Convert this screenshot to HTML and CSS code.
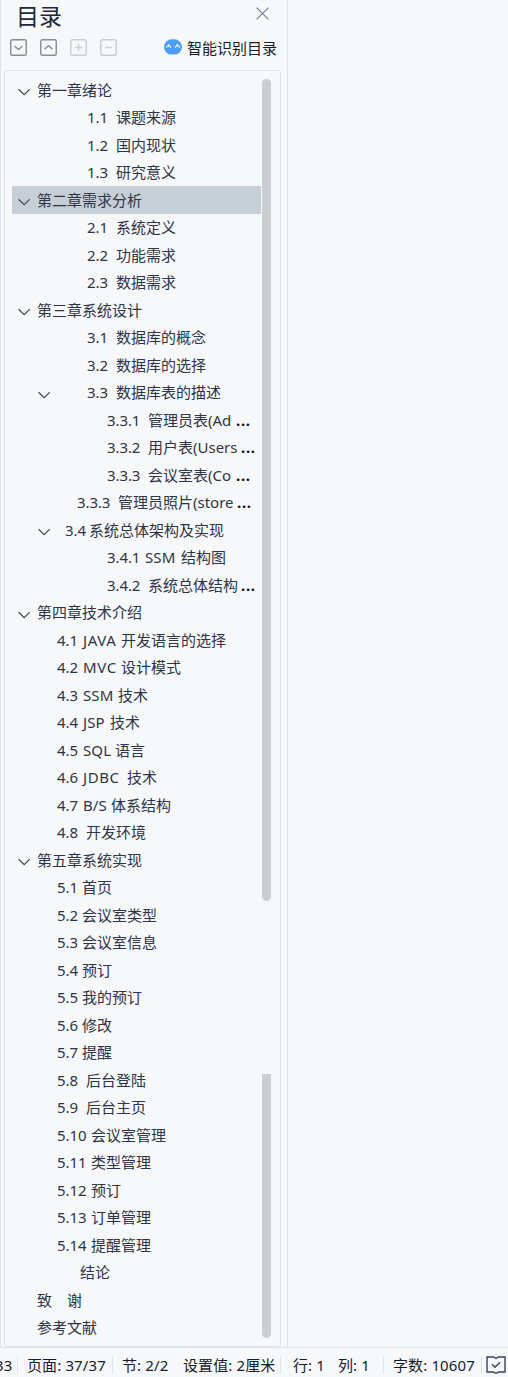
FILE: index.html
```html
<!DOCTYPE html>
<html lang="zh-CN">
<head>
<meta charset="utf-8">
<title>目录</title>
<link rel="stylesheet" href="styles.css">
</head>
<body>
<svg width="0" height="0" class="defs"><defs><symbol id="chev" viewBox="0 0 12 8"><path d="M.6 1.200 6.200 6.700 11.800 1.200" fill="none" stroke="currentColor" stroke-width="1.200"/></symbol></defs></svg>
<main class="workspace">
<aside class="panel">
<header class="head"><h1>目录</h1>
<svg class="close" viewBox="0 0 12 12"><path d="M.5.5l11 11M11.5.5l-11 11" fill="none" stroke="#74798c" stroke-width="1"/></svg></header>
<div class="tools">
<svg class="tool" viewBox="0 0 17 17"><rect x=".75" y=".75" width="15.5" height="15.5" rx="1.5"/><path d="M4.5 7l4 3.6 4-3.6"/></svg>
<svg class="tool" viewBox="0 0 17 17"><rect x=".75" y=".75" width="15.5" height="15.5" rx="1.5"/><path d="M4.5 10.3l4-3.6 4 3.6"/></svg>
<svg class="tool off" viewBox="0 0 17 17"><rect x=".75" y=".75" width="15.5" height="15.5" rx="1.5"/><path d="M5 8.5h7M8.5 5v7"/></svg>
<svg class="tool off" viewBox="0 0 17 17"><rect x=".75" y=".75" width="15.5" height="15.5" rx="1.5"/><path d="M5 8.5h7"/></svg>
<div class="smart"><svg class="bot" viewBox="0 0 18 16"><rect x="0" y=".2" width="18" height="15.400" rx="8" ry="7.500" fill="#4c9df5"/><g fill="#fff"><circle cx="4.600" cy="6.500" r="1.200"/><circle cx="13.400" cy="6.500" r="1.200"/><circle cx="2.600" cy="7.900" r=".8"/><circle cx="6.400" cy="7.900" r=".8"/><circle cx="11.600" cy="7.900" r=".8"/><circle cx="15.400" cy="7.900" r=".8"/></g></svg><span>智能识别目录</span></div>
</div>
<div class="box">
<div class="tree">
<div class="row chapter"><svg class="chev"><use href="#chev"/></svg>第一章绪论</div>
<div class="row deep"><b class="wide">1.1</b>课题来源</div>
<div class="row deep"><b class="wide">1.2</b>国内现状</div>
<div class="row deep"><b class="wide">1.3</b>研究意义</div>
<div class="row chapter selected"><svg class="chev"><use href="#chev"/></svg>第二章需求分析</div>
<div class="row deep"><b class="wide">2.1</b>系统定义</div>
<div class="row deep"><b class="wide">2.2</b>功能需求</div>
<div class="row deep"><b class="wide">2.3</b>数据需求</div>
<div class="row chapter"><svg class="chev"><use href="#chev"/></svg>第三章系统设计</div>
<div class="row deep"><b class="wide">3.1</b>数据库的概念</div>
<div class="row deep"><b class="wide">3.2</b>数据库的选择</div>
<div class="row nested"><svg class="chev"><use href="#chev"/></svg><b class="wide">3.3</b>数据库表的描述</div>
<div class="row sub"><b class="triple">3.3.1</b><span class="clip c1">管理员表(Ad</span><i>...</i></div>
<div class="row sub"><b class="triple">3.3.2</b><span class="clip c2">用户表(Users</span><i>...</i></div>
<div class="row sub"><b class="triple">3.3.3</b><span class="clip c1">会议室表(Co</span><i>...</i></div>
<div class="row photo"><b class="triple">3.3.3</b><span class="clip c3">管理员照片(store</span><i>...</i></div>
<div class="row nested arch"><svg class="chev"><use href="#chev"/></svg><b class="tight">3.4</b>系统总体架构及实现</div>
<div class="row sub"><b class="mid">3.4.1</b><em class="w36">SSM</em>结构图</div>
<div class="row sub"><b class="triple">3.4.2</b><span class="clip c2">系统总体结构</span><i>...</i></div>
<div class="row chapter"><svg class="chev"><use href="#chev"/></svg>第四章技术介绍</div>
<div class="row item"><b class="latin">4.1</b><em class="w38 loose">JAVA</em>开发语言的选择</div>
<div class="row item"><b class="latin">4.2</b><em class="w38 loose">MVC</em>设计模式</div>
<div class="row item"><b class="latin">4.3</b><em class="w35">SSM</em>技术</div>
<div class="row item"><b class="latin">4.4</b><em class="w27">JSP</em>技术</div>
<div class="row item"><b class="latin">4.5</b><em class="w32">SQL</em>语言</div>
<div class="row item"><b class="latin">4.6</b><em class="w44 loose">JDBC</em>技术</div>
<div class="row item"><b class="latin">4.7</b><em class="w28">B/S</em>体系结构</div>
<div class="row item"><b class="wide">4.8</b>开发环境</div>
<div class="row chapter"><svg class="chev"><use href="#chev"/></svg>第五章系统实现</div>
<div class="row item"><b>5.1</b>首页</div>
<div class="row item"><b>5.2</b>会议室类型</div>
<div class="row item"><b>5.3</b>会议室信息</div>
<div class="row item"><b>5.4</b>预订</div>
<div class="row item"><b>5.5</b>我的预订</div>
<div class="row item"><b>5.6</b>修改</div>
<div class="row item"><b>5.7</b>提醒</div>
<div class="row item"><b class="wide">5.8</b>后台登陆</div>
<div class="row item"><b class="wide">5.9</b>后台主页</div>
<div class="row item"><b class="ten">5.10</b>会议室管理</div>
<div class="row item"><b class="ten">5.11</b>类型管理</div>
<div class="row item"><b class="ten">5.12</b>预订</div>
<div class="row item"><b class="ten">5.13</b>订单管理</div>
<div class="row item"><b class="ten">5.14</b>提醒管理</div>
<div class="row ending">结论</div>
<div class="row plain">致　谢</div>
<div class="row plain">参考文献</div>
</div>
<div class="rail"><div class="thumb upper"></div><div class="thumb lower"></div></div>
</div>
</aside>
</main>
<footer class="status">
<span class="cut">33</span><span class="page">页面: 37/37</span><span class="section">节: 2/2</span><span class="setting">设置值: 2厘米</span><span class="line">行: 1</span><span class="col">列: 1</span><span class="count">字数: 10607</span>
<svg class="check" viewBox="0 0 20 18"><path d="M1 1h6.500l2.500 1.500L12.500 1H19v15h-6.500L10 17.300 7.500 16H1zM6 8.300l3 3 5-5" fill="none" stroke="#3b4055" stroke-width="1.400"/></svg>
</footer>
</body>
</html>
```
FILE: styles.css
```css
* { box-sizing: border-box; }
body {
  margin: 0;
  width: 508px;
  height: 1377px;
  overflow: hidden;
  display: flex;
  flex-direction: column;
  background: #f6f8fa;
  color: #2f3447;
  font: 15px/27px "Noto Sans", "Noto Sans CJK SC", sans-serif;
}
.defs { display: none; }
.workspace { height: 1347px; flex: none; }
.panel {
  width: 288px;
  height: 1347px;
  border-left: 1px solid #e1e3eb;
  border-right: 1px solid #e1e3eb;
}
.head { height: 34px; display: flex; padding: 0 18px 0 15px; justify-content: space-between; }
h1 { margin: 0; font: 400 23px/31px "Noto Sans CJK SC", sans-serif; color: #222839; }
.close { width: 13px; height: 13px; margin-top: 7px; }
.tools { height: 36px; display: flex; padding: 5px 0 0 9px; gap: 13px; }
.tool { width: 17px; height: 17px; fill: none; stroke: #8a8c91; stroke-width: 1.4; }
.tool.off { stroke: #cbcdd1; }
.smart { display: flex; margin-left: 34px; line-height: 18px; color: #171c2b; }
.smart span { white-space: nowrap; }
.bot { width: 18px; height: 16px; margin-right: 5px; }
.box {
  width: 277px;
  height: 1277px;
  margin-left: 3px;
  border: 1px solid #e1e3eb;
  border-radius: 3px;
  display: flex;
}
.tree { width: 249px; margin: 5.75px 0 0 7px; }
.row { height: 27.5px; line-height: 27.5px; display: flex; align-items: center; white-space: pre; }
.chapter { padding-left: 6px; }
.chapter .chev { margin-right: 7px; }
.selected { background: #c6ced6; box-shadow: 0 -1px #c6ced6; }
.chev { width: 12px; height: 8px; margin-top: 3px; flex: none; color: #41475a; }
.deep { padding-left: 75px; }
.nested { padding-left: 26px; }
.nested .chev { margin-right: 37px; }
.arch .chev { margin-right: 15px; }
.sub { padding-left: 95px; }
.photo { padding-left: 65px; }
.item { padding-left: 45px; }
.ending { padding-left: 68px; }
.plain { padding-left: 25px; }
b { width: 25px; font-weight: 400; flex: none; letter-spacing: -.1px; }
.wide { width: 29px; }
.triple { width: 41px; }
.mid { width: 38px; }
.tight { width: 24px; }
.latin { width: 26px; }
.ten { width: 34px; }
em { font-style: normal; flex: none; letter-spacing: .1px; }
.loose { letter-spacing: .6px; }
.w27 { width: 27px; }
.w28 { width: 28px; }
.w32 { width: 32px; }
.w35 { width: 35px; }
.w36 { width: 36px; }
.w38 { width: 38px; }
.w44 { width: 44px; }
.clip { flex: none; }
.c1 { width: 88px; }
.c2 { width: 93px; }
.c3 { width: 119px; }
i { font-style: normal; font-weight: 700; color: #111; letter-spacing: .7px; }
.rail { width: 9px; margin-left: 1px; padding-top: 8px; }
.thumb { background: #cbced2; }
.upper { height: 822px; border-radius: 5px; }
.lower { height: 264px; margin-top: 173px; border-radius: 0 0 5px 5px; }
.status {
  height: 30px;
  border-top: 1px solid #e1e3eb;
  display: flex;
  align-items: center;
  padding-top: 5px;
  color: #171c2b;
  line-height: 18px;
  white-space: nowrap;
}
.status span { flex: none; height: 18px; letter-spacing: .12px; }
.status .cut { width: 23px; margin-left: -5px; border-right: 1px solid #e1e3eb; }
.page { width: 95px; padding-left: 9px; border-right: 1px solid #e1e3eb; }
.section { width: 70px; padding-left: 9px; }
.setting { width: 98px; border-right: 1px solid #e1e3eb; }
.line { width: 57px; padding-left: 12px; }
.col { width: 46px; border-right: 1px solid #e1e3eb; }
.count { width: 98px; padding-left: 9px; border-right: 1px solid #e1e3eb; }
.check { width: 20px; height: 18px; margin-left: 4px; }
```
